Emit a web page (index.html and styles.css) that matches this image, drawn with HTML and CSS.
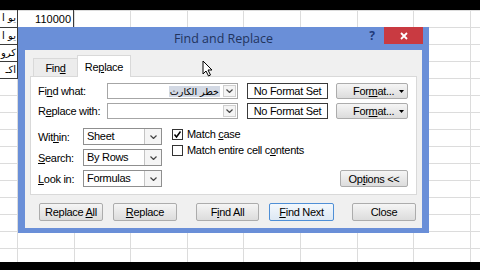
FILE: index.html
```html
<!DOCTYPE html>
<html>
<head>
<meta charset="utf-8">
<link rel="stylesheet" href="styles.css">
</head>
<body>
<div class="screen">
  <div class="blackbar"></div>
  <div class="sheet">
    <div class="cell side">يو ا</div>
    <div class="cell num">110000</div>
    <div class="cell side">يو ا</div><div class="cell"></div>
    <div class="cell side">كرو</div><div class="cell"></div>
    <div class="cell side">اكـ</div><div class="cell"></div>
  </div>
  <div class="blackbar bottom"></div>

  <div class="dialog">
    <div class="titlebar">
      <div></div>
      <div class="title">Find and Replace</div>
      <div class="controls">
        <span class="help">?</span>
        <span class="close"><svg width="8" height="8" viewBox="0 0 8 8"><path d="M1 1 L7 7 M7 1 L1 7" stroke="#fff" stroke-width="1.8"/></svg></span>
      </div>
    </div>
    <div class="client">
      <div class="tabs">
        <div class="tab"><span>Fin<u>d</u></span></div>
        <div class="tab active"><span>Re<u>p</u>lace</span></div>
      </div>
      <div class="panel">
        <div class="frow">
          <span class="lbl">Fi<u>n</u>d what:</span>
          <div class="combo">
            <span class="val"><span class="sel">خطر الكارث</span></span>
            <span class="drop"><svg width="7" height="4" viewBox="0 0 7 4"><polyline points="0.5,0.5 3.5,3.5 6.5,0.5" fill="none" stroke="#444" stroke-width="1.2"/></svg></span>
          </div>
          <div class="fmtset">No Format Set</div>
          <div class="btn fmt"><span>For<u>m</u>at...</span><svg width="5" height="3" viewBox="0 0 5 3"><polygon points="0,0 5,0 2.5,3" fill="#000"/></svg></div>
        </div>
        <div class="frow">
          <span class="lbl">R<u>e</u>place with:</span>
          <div class="combo">
            <span class="val"></span>
            <span class="drop"><svg width="7" height="4" viewBox="0 0 7 4"><polyline points="0.5,0.5 3.5,3.5 6.5,0.5" fill="none" stroke="#444" stroke-width="1.2"/></svg></span>
          </div>
          <div class="fmtset">No Format Set</div>
          <div class="btn fmt"><span>For<u>m</u>at...</span><svg width="5" height="3" viewBox="0 0 5 3"><polygon points="0,0 5,0 2.5,3" fill="#000"/></svg></div>
        </div>
        <div class="lower">
          <div class="opts">
            <div class="orow"><span class="olbl">Wit<u>h</u>in:</span><div class="select"><span class="v">Sheet</span><span class="sdrop"><svg width="7" height="4" viewBox="0 0 7 4"><polyline points="0.5,0.5 3.5,3.5 6.5,0.5" fill="none" stroke="#444" stroke-width="1.2"/></svg></span></div></div>
            <div class="orow"><span class="olbl"><u>S</u>earch:</span><div class="select"><span class="v">By Rows</span><span class="sdrop"><svg width="7" height="4" viewBox="0 0 7 4"><polyline points="0.5,0.5 3.5,3.5 6.5,0.5" fill="none" stroke="#444" stroke-width="1.2"/></svg></span></div></div>
            <div class="orow"><span class="olbl"><u>L</u>ook in:</span><div class="select"><span class="v">Formulas</span><span class="sdrop"><svg width="7" height="4" viewBox="0 0 7 4"><polyline points="0.5,0.5 3.5,3.5 6.5,0.5" fill="none" stroke="#444" stroke-width="1.2"/></svg></span></div></div>
          </div>
          <div class="checks">
            <div class="chk"><span class="box"><svg width="9" height="9" viewBox="0 0 9 9"><path d="M1.5 4.5 L3.5 7 L7.5 1.5" fill="none" stroke="#000" stroke-width="1.5"/></svg></span><span>Match <u>c</u>ase</span></div>
            <div class="chk"><span class="box"></span><span>Match entire cell c<u>o</u>ntents</span></div>
          </div>
          <div class="btn optbtn"><span>Op<u>t</u>ions &lt;&lt;</span></div>
        </div>
      </div>
      <div class="buttons">
        <div class="btn bb"><span>Replace <u>A</u>ll</span></div>
        <div class="btn bb"><span><u>R</u>eplace</span></div>
        <div class="btn bb find-all"><span>F<u>i</u>nd All</span></div>
        <div class="btn bb find-next"><span><u>F</u>ind Next</span></div>
        <div class="btn bb close-btn"><span>Close</span></div>
      </div>
    </div>
  </div>

  <svg class="cursor" width="12" height="17" viewBox="0 0 12 17"><path d="M1 1 L1 14 L4 11 L6.5 16 L8.5 15 L6 10 L10 10 Z" fill="#fff" stroke="#000" stroke-width="1"/></svg>
</div>
</body>
</html>
```

FILE: styles.css
```css
* { box-sizing: border-box; }
html, body { margin: 0; padding: 0; }
body {
  width: 480px;
  height: 270px;
  overflow: hidden;
  background: #fff;
  font-family: "Liberation Sans", Arial, sans-serif;
}
.screen {
  position: relative;
  width: 480px;
  height: 270px;
  display: flex;
  flex-direction: column;
}
.blackbar { height: 10px; background: #000; flex: none; }
.blackbar.bottom { height: 8px; }

.sheet {
  flex: 1;
  background-color: #fff;
  background-image:
    repeating-linear-gradient(90deg, #dcdcdc 0 1px, transparent 1px 56.6px),
    repeating-linear-gradient(180deg, #dcdcdc 0 1px, transparent 1px 17px);
  background-position: 17px 0, 0 0;
  display: grid;
  grid-template-columns: 18px 56px;
  grid-template-rows: 18px 17px 17px 17px;
  align-content: start;
}
.cell {
  font-size: 11px;
  color: #000;
  overflow: hidden;
  white-space: nowrap;
}
.cell.side {
  border-right: 1px solid #3a3a3a;
  border-bottom: 1px solid #3a3a3a;
  direction: rtl;
  text-align: right;
  padding-right: 1px;
  font-family: "DejaVu Sans", sans-serif;
  font-size: 10px;
  line-height: 16px;
}
.cell.num {
  text-align: right;
  padding-right: 2px;
  border-right: 1px solid #3a3a3a;
  line-height: 18px;
}

.dialog {
  position: absolute;
  left: 18px;
  top: 27px;
  width: 411px;
  height: 206px;
  background: #6a8fd8;
  padding: 0 7px 5px;
  display: flex;
  flex-direction: column;
  font-family: "Liberation Sans", Arial, sans-serif;
  font-size: 11px;
  letter-spacing: -0.3px;
  color: #000;
}
.titlebar {
  height: 23px;
  margin: 0 -7px;
  display: grid;
  grid-template-columns: 1fr auto 1fr;
  flex: none;
}
.title {
  font-family: "Open Sans", sans-serif;
  font-size: 12.5px;
  letter-spacing: 0;
  color: #22345d;
  line-height: 23px;
}
.controls {
  display: flex;
  justify-content: flex-end;
  align-items: flex-start;
}
.help {
  width: 14px;
  height: 17px;
  line-height: 18px;
  text-align: center;
  font-family: "Open Sans", sans-serif;
  font-weight: bold;
  font-size: 12px;
  color: #1f3a7a;
  margin-right: 5px;
}
.close {
  width: 39px;
  height: 17px;
  background: #c93a41;
  margin-right: 6px;
  display: flex;
  align-items: center;
  justify-content: center;
}

.client {
  flex: 1;
  background: #f0f0f0;
  padding: 5px 5px 7px;
  display: flex;
  flex-direction: column;
}
.tabs {
  display: flex;
  height: 21px;
  align-items: flex-end;
  padding-left: 3px;
  flex: none;
}
.tab {
  height: 18px;
  width: 45px;
  border: 1px solid #d9d9d9;
  border-bottom: none;
  background: #ececec;
  display: flex;
  align-items: center;
  justify-content: center;
}
.tab.active {
  position: relative;
  z-index: 1;
  height: 22px;
  width: 54px;
  margin-left: -1px;
  margin-bottom: -1px;
  background: #fff;
}

.panel {
  height: 119px;
  flex: none;
  background: #fff;
  border: 1px solid #d9d9d9;
  padding: 6px 8px 0 7px;
  display: flex;
  flex-direction: column;
}
.frow {
  display: flex;
  align-items: center;
  height: 16px;
}
.frow + .frow { margin-top: 4px; }
.lbl { width: 69px; flex: none; }
.combo {
  width: 131px;
  height: 16px;
  border: 1px solid #a6a6a6;
  background: #fff;
  display: flex;
  flex: none;
}
.combo .val {
  flex: 1;
  text-align: right;
  padding-right: 2px;
  line-height: 14px;
  overflow: hidden;
}
.combo .sel {
  background: #d3d9e4;
  font-family: "DejaVu Sans", sans-serif;
  font-size: 9.5px;
  letter-spacing: 0;
  padding: 0 1px;
}
.combo .drop {
  width: 13px;
  margin: 1px;
  border: 1px solid #cfcfcf;
  background: #f4f4f4;
  display: flex;
  align-items: center;
  justify-content: center;
}
.fmtset {
  width: 81px;
  height: 16px;
  margin-left: 9px;
  border: 1px solid #3a3a3a;
  background: #fff;
  text-align: center;
  line-height: 14px;
  flex: none;
}
.btn {
  border: 1px solid #acacac;
  border-radius: 2px;
  background: linear-gradient(#f5f5f5, #dcdcdc);
  display: flex;
  align-items: center;
  justify-content: center;
  flex: none;
}
.fmt {
  width: 72px;
  height: 16px;
  margin-left: 8px;
  justify-content: space-between;
  padding: 0 3px 0 16px;
}

.lower {
  display: flex;
  margin-top: 9px;
}
.opts {
  display: flex;
  flex-direction: column;
  gap: 4px;
}
.orow {
  display: flex;
  align-items: center;
  height: 17px;
}
.olbl { width: 45px; }
.select {
  width: 79px;
  height: 17px;
  border: 1px solid #8f8f8f;
  background: #fff;
  display: flex;
}
.select .v {
  flex: 1;
  padding-left: 3px;
  line-height: 15px;
}
.select .sdrop {
  width: 17px;
  border-left: 1px solid #c4c4c4;
  background: #f5f5f5;
  display: flex;
  align-items: center;
  justify-content: center;
}
.checks {
  margin-left: 10px;
  margin-top: -2px;
  display: flex;
  flex-direction: column;
}
.chk {
  display: flex;
  align-items: center;
  height: 16px;
}
.box {
  width: 11px;
  height: 11px;
  border: 1px solid #333;
  background: #fff;
  margin-right: 4px;
  display: flex;
  align-items: center;
  justify-content: center;
}
.optbtn {
  margin-left: auto;
  align-self: flex-end;
  width: 68px;
  height: 17px;
}

.buttons {
  display: flex;
  margin-top: 8px;
  padding-left: 9px;
  gap: 10px;
}
.bb { width: 64px; height: 18px; }
.find-all { margin-left: 9px; width: 63px; }
.find-next {
  width: 65px;
  border-color: #4f8fd6;
  background: linear-gradient(#f3f8fd, #dde8f3);
}
.close-btn { margin-left: 8px; }

.cursor {
  position: absolute;
  left: 202px;
  top: 60px;
}
```
